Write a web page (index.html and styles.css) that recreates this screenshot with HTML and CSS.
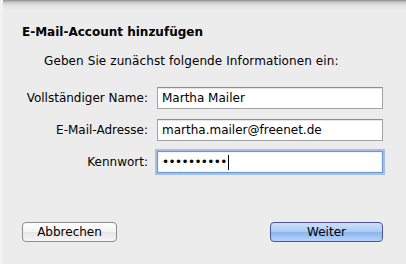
FILE: index.html
```html
<!DOCTYPE html>
<html lang="de">
<head>
    <meta charset="UTF-8">
    <title>E-Mail-Account hinzufügen</title>
    <link rel="stylesheet" href="styles.css">
</head>
<body>
    <div class="sheet">
        <h1>E-Mail-Account hinzufügen</h1>
        <p class="intro">Geben Sie zunächst folgende Informationen ein:</p>

        <div class="form">
            <label for="name">Vollständiger Name:</label>
            <input type="text" id="name" value="Martha Mailer">

            <label for="email">E-Mail-Adresse:</label>
            <input type="text" id="email" value="martha.mailer@freenet.de">

            <label>Kennwort:</label>
            <div class="field focused"><span class="dots">••••••••••</span><span class="caret"></span></div>
        </div>

        <div class="buttons">
            <button class="btn">Abbrechen</button>
            <button class="btn primary">Weiter</button>
        </div>
    </div>
</body>
</html>
```

FILE: styles.css
```css
html, body {
    margin: 0;
    height: 100%;
}
body {
    font-family: "DejaVu Sans", sans-serif;
    font-size: 12px;
    color: #000;
    background-color: #ececec;
    background-image: linear-gradient(#8c8c8c, #c4c4c4 2px, #e2e2e2 5px, #ececec 10px);
}
.sheet {
    padding: 25px 23px 0 19px;
    border-left: 3px solid #f3f3f3;
    height: 100%;
    box-sizing: border-box;
}
h1 {
    font-size: 12px;
    font-weight: bold;
    margin: 0;
    line-height: 15px;
}
.intro {
    margin: 14px 0 0 22px;
    line-height: 15px;
    letter-spacing: 0.1px;
}
.form {
    display: grid;
    grid-template-columns: 126px 226px;
    column-gap: 9px;
    row-gap: 10px;
    align-items: center;
    margin-top: 18px;
}
.form label {
    text-align: right;
}
.form input, .field {
    height: 22px;
    box-sizing: border-box;
    border: 1px solid #a3a3a3;
    border-top-color: #8e8e8e;
    background: #fff;
    font: inherit;
    padding: 0 4px;
    margin: 0;
    box-shadow: inset 0 1px 0 #e6e6e6;
    outline: none;
}
.field {
    display: flex;
    align-items: center;
}
.focused {
    border-color: #6e96cf;
    box-shadow: 0 0 0 2px #a3c0e6, inset 0 0 1px #6e96cf;
}
.dots {
    font-size: 12px;
    letter-spacing: -0.6px;
}
.caret {
    width: 1px;
    height: 15px;
    background: #000;
    margin-left: 1px;
}
.buttons {
    display: flex;
    justify-content: space-between;
    margin-top: 49px;
}
.btn {
    font: inherit;
    height: 20px;
    padding: 0;
    border-radius: 4px;
    border: 1px solid #8d8d8d;
    background: linear-gradient(#ffffff, #f3f3f3 50%, #e6e6e6 51%, #f6f6f6);
    color: #000;
}
.btn:first-child {
    width: 95px;
}
.primary {
    width: 113px;
    border-color: #4f4f95;
    background: linear-gradient(#cfe1fb, #a9c9f4 50%, #8bb5ef 51%, #b7d4fb);
}
```
